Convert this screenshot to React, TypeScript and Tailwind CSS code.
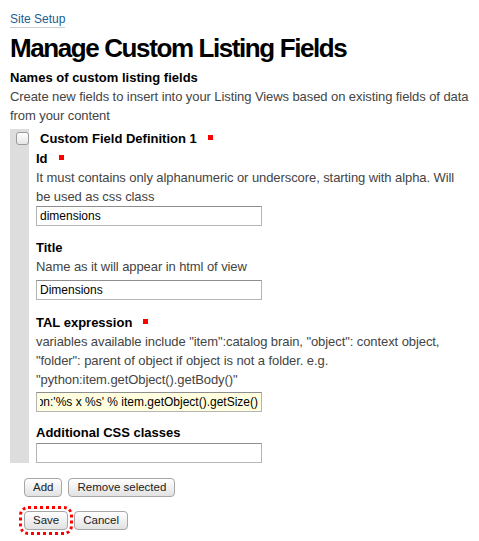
import { useEffect, useRef } from "react";

const Required = () => (
  <span className="inline-block w-[5px] h-[5px] bg-[#ff0000] ml-[11px] align-[3px]" />
);

function Field({
  label,
  required,
  help,
  value,
  className = "",
  inputClass = "",
  inputRef,
}: {
  label: string;
  required?: boolean;
  help?: string[];
  value: string;
  className?: string;
  inputClass?: string;
  inputRef?: React.Ref<HTMLInputElement>;
}) {
  return (
    <div className={className}>
      <div className="font-bold text-black leading-[19px]">
        {label}
        {required && <Required />}
      </div>
      {help && (
        <div className="text-[#444] leading-[19px] tracking-[-0.08px]">
          {help.map((line) => (
            <div key={line} className="whitespace-nowrap">
              {line}
            </div>
          ))}
        </div>
      )}
      <input
        ref={inputRef}
        type="text"
        defaultValue={value}
        className={`block w-[226px] h-[20px] px-[3px] py-0 text-[12px] text-black border border-[#b5b5b5] border-t-[#8e8e8e] outline-none ${inputClass}`}
      />
    </div>
  );
}

function Button({ children, className = "" }: { children: React.ReactNode; className?: string }) {
  return (
    <button
      type="button"
      className={`h-[19px] px-[8px] rounded-[4px] border border-[#a6a6a6] bg-gradient-to-b from-white to-[#e2e2e2] text-[11.5px] leading-[17px] text-[#222] ${className}`}
    >
      {children}
    </button>
  );
}

export default function App() {
  const talRef = useRef<HTMLInputElement>(null);

  useEffect(() => {
    if (talRef.current) talRef.current.scrollLeft = talRef.current.scrollWidth;
  }, []);

  return (
    <div className="min-h-[541px] bg-white pl-[10px] pt-[12px] text-[13px] font-['Liberation_Sans',Arial,sans-serif]">
      <a href="#" className="block w-fit text-[12px] leading-[15px] text-[#205c90] border-b border-[#cfcfcf]">
        Site Setup
      </a>

      <h1 className="mt-[5px] text-[26px] leading-[30px] font-bold tracking-[-1.4px] text-black">
        Manage Custom Listing Fields
      </h1>

      <div className="mt-[5px] font-bold text-black leading-[19px]">Names of custom listing fields</div>
      <div className="text-[#444] leading-[19px] tracking-[-0.08px]">
        <div className="whitespace-nowrap">
          Create new fields to insert into your Listing Views based on existing fields of data
        </div>
        <div>from your content</div>
      </div>

      <div className="mt-[4px] flex">
        <div className="w-[19px] shrink-0 bg-[#dddddd] pl-[6px] pt-[3px]">
          <span className="block w-[13px] h-[13px] rounded-[3px] border border-[#9a9a9a] bg-gradient-to-b from-white to-[#e6e6e6]" />
        </div>
        <div className="pl-[7px]">
          <div className="pl-[4px] font-bold text-black leading-[20px]">
            Custom Field Definition 1
            <Required />
          </div>

          <Field
            label="Id"
            required
            help={[
              "It must contains only alphanumeric or underscore, starting with alpha. Will",
              "be used as css class",
            ]}
            value="dimensions"
          />

          <Field
            label="Title"
            className="mt-[12px]"
            help={["Name as it will appear in html of view"]}
            value="Dimensions"
            inputClass="mt-[4px]"
          />

          <Field
            label="TAL expression"
            required
            className="mt-[13px]"
            help={[
              "variables available include \"item\":catalog brain, \"object\": context object,",
              "\"folder\": parent of object if object is not a folder. e.g.",
              "\"python:item.getObject().getBody()\"",
            ]}
            value="python:'%s x %s' % item.getObject().getSize()"
            inputClass="mt-[3px] bg-[#ffffe0]"
            inputRef={talRef}
          />

          <Field
            label="Additional CSS classes"
            className="mt-[11px]"
            value=""
            inputClass="mt-[1px]"
          />
        </div>
      </div>

      <div className="mt-[15px] ml-[14px] flex gap-[6px]">
        <Button>Add</Button>
        <Button>Remove selected</Button>
      </div>

      <div className="mt-[14px] ml-[14px] flex gap-[6px]">
        <Button className="outline-[3px] outline-dotted outline-[#ff0000] outline-offset-2">Save</Button>
        <Button>Cancel</Button>
      </div>
    </div>
  );
}
